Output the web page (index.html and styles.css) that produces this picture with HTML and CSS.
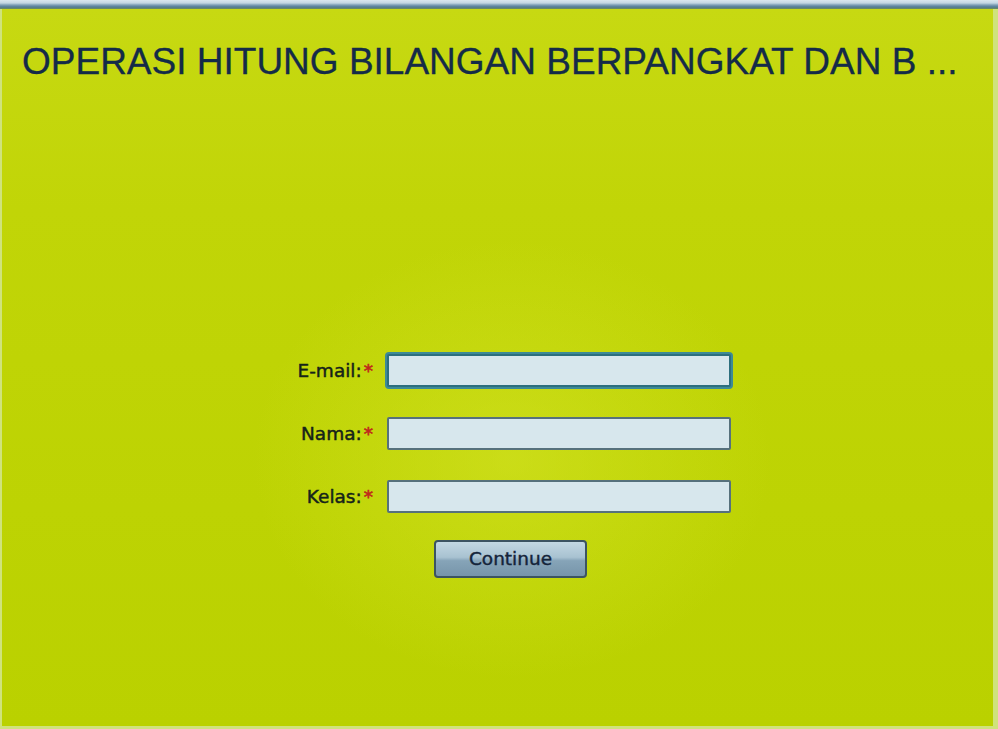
FILE: index.html
```html
<!DOCTYPE html>
<html>
<head>
<meta charset="utf-8">
<link rel="stylesheet" href="styles.css">
</head>
<body>
<div class="topbar"></div>
<div class="panel">
  <h1 class="title">OPERASI HITUNG BILANGAN BERPANGKAT DAN B ...</h1>
  <form class="form">
    <div class="fields">
      <label class="label">E-mail:<span class="req">*</span></label>
      <div class="input focus"></div>
      <label class="label">Nama:<span class="req">*</span></label>
      <div class="input"></div>
      <label class="label">Kelas:<span class="req">*</span></label>
      <div class="input"></div>
    </div>
    <div class="actions">
      <div class="button">Continue</div>
    </div>
  </form>
</div>
</body>
</html>
```

FILE: styles.css
```css
html, body {
  margin: 0;
  padding: 0;
}
body {
  width: 998px;
  height: 729px;
  overflow: hidden;
  background: #cfe37c;
}
.topbar {
  height: 9px;
  background: linear-gradient(to bottom, #dbe7ee 0px, #c4d7e3 3px, #7e9fb6 5px, #527a96 7px, #6f8f5a 9px);
}
.panel {
  margin-left: 2px;
  width: 991px;
  height: 717px;
  background:
    radial-gradient(ellipse 260px 220px at 510px 450px, rgba(214,228,40,0.55), rgba(214,228,40,0) 100%),
    linear-gradient(to bottom, #c7d912 0px, #c1d507 200px, #bdd303 500px, #bad100 717px);
  overflow: hidden;
}
.title {
  margin: 0;
  padding: 31px 0 0 20px;
  font-family: "Liberation Sans", Arial, sans-serif;
  font-weight: normal;
  font-size: 37px;
  line-height: 43px;
  color: #142b48;
  -webkit-text-stroke: 0.3px #142b48;
  white-space: nowrap;
}
.form {
  margin: 271px 0 0 290px;
  width: 439px;
  font-family: "DejaVu Sans", Verdana, sans-serif;
}
.fields {
  display: grid;
  grid-template-columns: 81px 344px;
  column-gap: 14px;
  row-gap: 30px;
  align-items: center;
}
.label {
  text-align: right;
  font-size: 18.5px;
  line-height: 33px;
  color: #15231a;
  -webkit-text-stroke: 0.45px #15231a;
  white-space: nowrap;
}
.req {
  color: #c0281c;
  -webkit-text-stroke: 0.6px #c0281c;
  margin-left: 2px;
}
.input {
  box-sizing: border-box;
  height: 33px;
  background: #d7e7ed;
  border: 2px solid #56717c;
  border-radius: 2px;
}
.input.focus {
  border-color: #2c6f7e;
  box-shadow: 0 0 0 2px #3d8a96;
}
.actions {
  display: flex;
  justify-content: center;
  margin-top: 27px;
  padding-right: 2px;
}
.button {
  box-sizing: border-box;
  width: 153px;
  height: 38px;
  border: 2px solid #3c5462;
  border-radius: 4px;
  background: linear-gradient(to bottom, #c3d8e3 0%, #a8c2d1 45%, #86a4b8 55%, #7795aa 100%);
  font-size: 18.5px;
  line-height: 33px;
  text-align: center;
  color: #14243a;
  -webkit-text-stroke: 0.4px #14243a;
}
```
